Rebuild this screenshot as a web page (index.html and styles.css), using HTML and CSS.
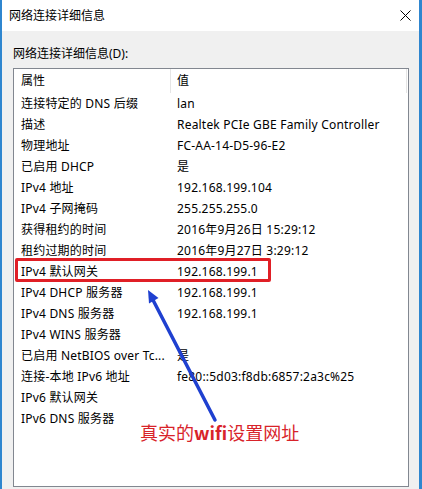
FILE: index.html
```html
<!DOCTYPE html>
<html lang="zh-CN">
<head>
<meta charset="utf-8">
<title>网络连接详细信息</title>
<link rel="stylesheet" href="styles.css">
</head>
<body>
<div class="window">
  <div class="titlebar">
    <span class="title">网络连接详细信息</span>
    <svg class="close" width="11" height="11" viewBox="0 0 11 11"><path d="M0.5 0.5 L10.5 10.5 M10.5 0.5 L0.5 10.5" stroke="#000" stroke-width="1" fill="none"/></svg>
  </div>
  <div class="body">
    <div class="label">网络连接详细信息(D):</div>
    <div class="listview">
      <div class="header">
        <div class="hcell">属性</div>
        <div class="hcell hcell-value">值</div>
      </div>
      <div class="rows">
        <div class="row"><span>连接特定的 DNS 后缀</span><span>lan</span></div>
        <div class="row"><span>描述</span><span>Realtek PCIe GBE Family Controller</span></div>
        <div class="row"><span>物理地址</span><span>FC-AA-14-D5-96-E2</span></div>
        <div class="row"><span>已启用 DHCP</span><span>是</span></div>
        <div class="row"><span>IPv4 地址</span><span>192.168.199.104</span></div>
        <div class="row"><span>IPv4 子网掩码</span><span>255.255.255.0</span></div>
        <div class="row"><span>获得租约的时间</span><span>2016年9月26日 15:29:12</span></div>
        <div class="row"><span>租约过期的时间</span><span>2016年9月27日 3:29:12</span></div>
        <div class="row"><span>IPv4 默认网关</span><span>192.168.199.1</span></div>
        <div class="row"><span>IPv4 DHCP 服务器</span><span>192.168.199.1</span></div>
        <div class="row"><span>IPv4 DNS 服务器</span><span>192.168.199.1</span></div>
        <div class="row"><span>IPv4 WINS 服务器</span><span></span></div>
        <div class="row"><span>已启用 NetBIOS over Tc...</span><span>是</span></div>
        <div class="row"><span>连接-本地 IPv6 地址</span><span>fe80::5d03:f8db:6857:2a3c%25</span></div>
        <div class="row"><span>IPv6 默认网关</span><span></span></div>
        <div class="row"><span>IPv6 DNS 服务器</span><span></span></div>
      </div>
      <div class="highlight"></div>
    </div>
  </div>
  <svg class="arrow" width="422" height="489" viewBox="0 0 422 489">
    <line x1="215" y1="420" x2="153" y2="300" stroke="#1f40d0" stroke-width="3.5" stroke-linecap="round"/>
    <polygon points="148,290 158.5,298 149,303.5" fill="#1f40d0"/>
  </svg>
  <div class="note">真实的<span class="note-latin">wifi</span>设置网址</div>
</div>
</body>
</html>
```

FILE: styles.css
```css
* { box-sizing: border-box; }
html, body {
  margin: 0;
  padding: 0;
  background: #f0f0f0;
}
body {
  font-family: "Noto Sans", "Noto Sans CJK SC", sans-serif;
  font-size: 12px;
  color: #000;
}
.window {
  position: relative;
  width: 422px;
  height: 489px;
  display: flex;
  flex-direction: column;
  border-left: 2px solid #2f86cf;
  border-right: 3px solid #2f86cf;
  background: #f0f0f0;
}
.titlebar {
  height: 31px;
  flex: none;
  background: #fff;
  display: flex;
  align-items: center;
  justify-content: space-between;
  padding: 0 8px 0 7px;
}
.title {
  line-height: 31px;
}
.close {
  display: block;
}
.body {
  flex: 1;
  display: flex;
  flex-direction: column;
  padding: 15px 10px 2px 11px;
  min-height: 0;
}
.label {
  line-height: 16px;
  height: 16px;
  margin-bottom: 6px;
}
.listview {
  position: relative;
  flex: 1;
  background: #fff;
  border: 1px solid #828790;
  overflow: hidden;
}
.header {
  display: grid;
  grid-template-columns: 156px 1fr;
  height: 24px;
}
.hcell {
  line-height: 24px;
  padding-left: 7px;
}
.hcell-value {
  border-left: 1px solid #e5e5e5;
  border-right: 1px solid #e5e5e5;
  padding-left: 6px;
  margin-right: 1px;
}
.rows {
  display: flex;
  flex-direction: column;
}
.row {
  display: grid;
  grid-template-columns: 156px 1fr;
  height: 21px;
  line-height: 21px;
  white-space: nowrap;
  letter-spacing: 0.2px;
}
.row span {
  padding-left: 7px;
  overflow: hidden;
}
.highlight {
  position: absolute;
  left: 1px;
  top: 189px;
  width: 256px;
  height: 24px;
  border: 3px solid #e01f26;
  border-radius: 2px;
}
.arrow {
  position: absolute;
  left: -2px;
  top: 0;
  pointer-events: none;
}
.note {
  position: absolute;
  left: 138px;
  top: 421px;
  font-family: "Noto Sans CJK SC", sans-serif;
  font-size: 18px;
  line-height: 22px;
  color: #d8232a;
  white-space: nowrap;
  text-shadow: 0 0 2px #fff;
}
.note-latin {
  font-weight: 600;
}
```
